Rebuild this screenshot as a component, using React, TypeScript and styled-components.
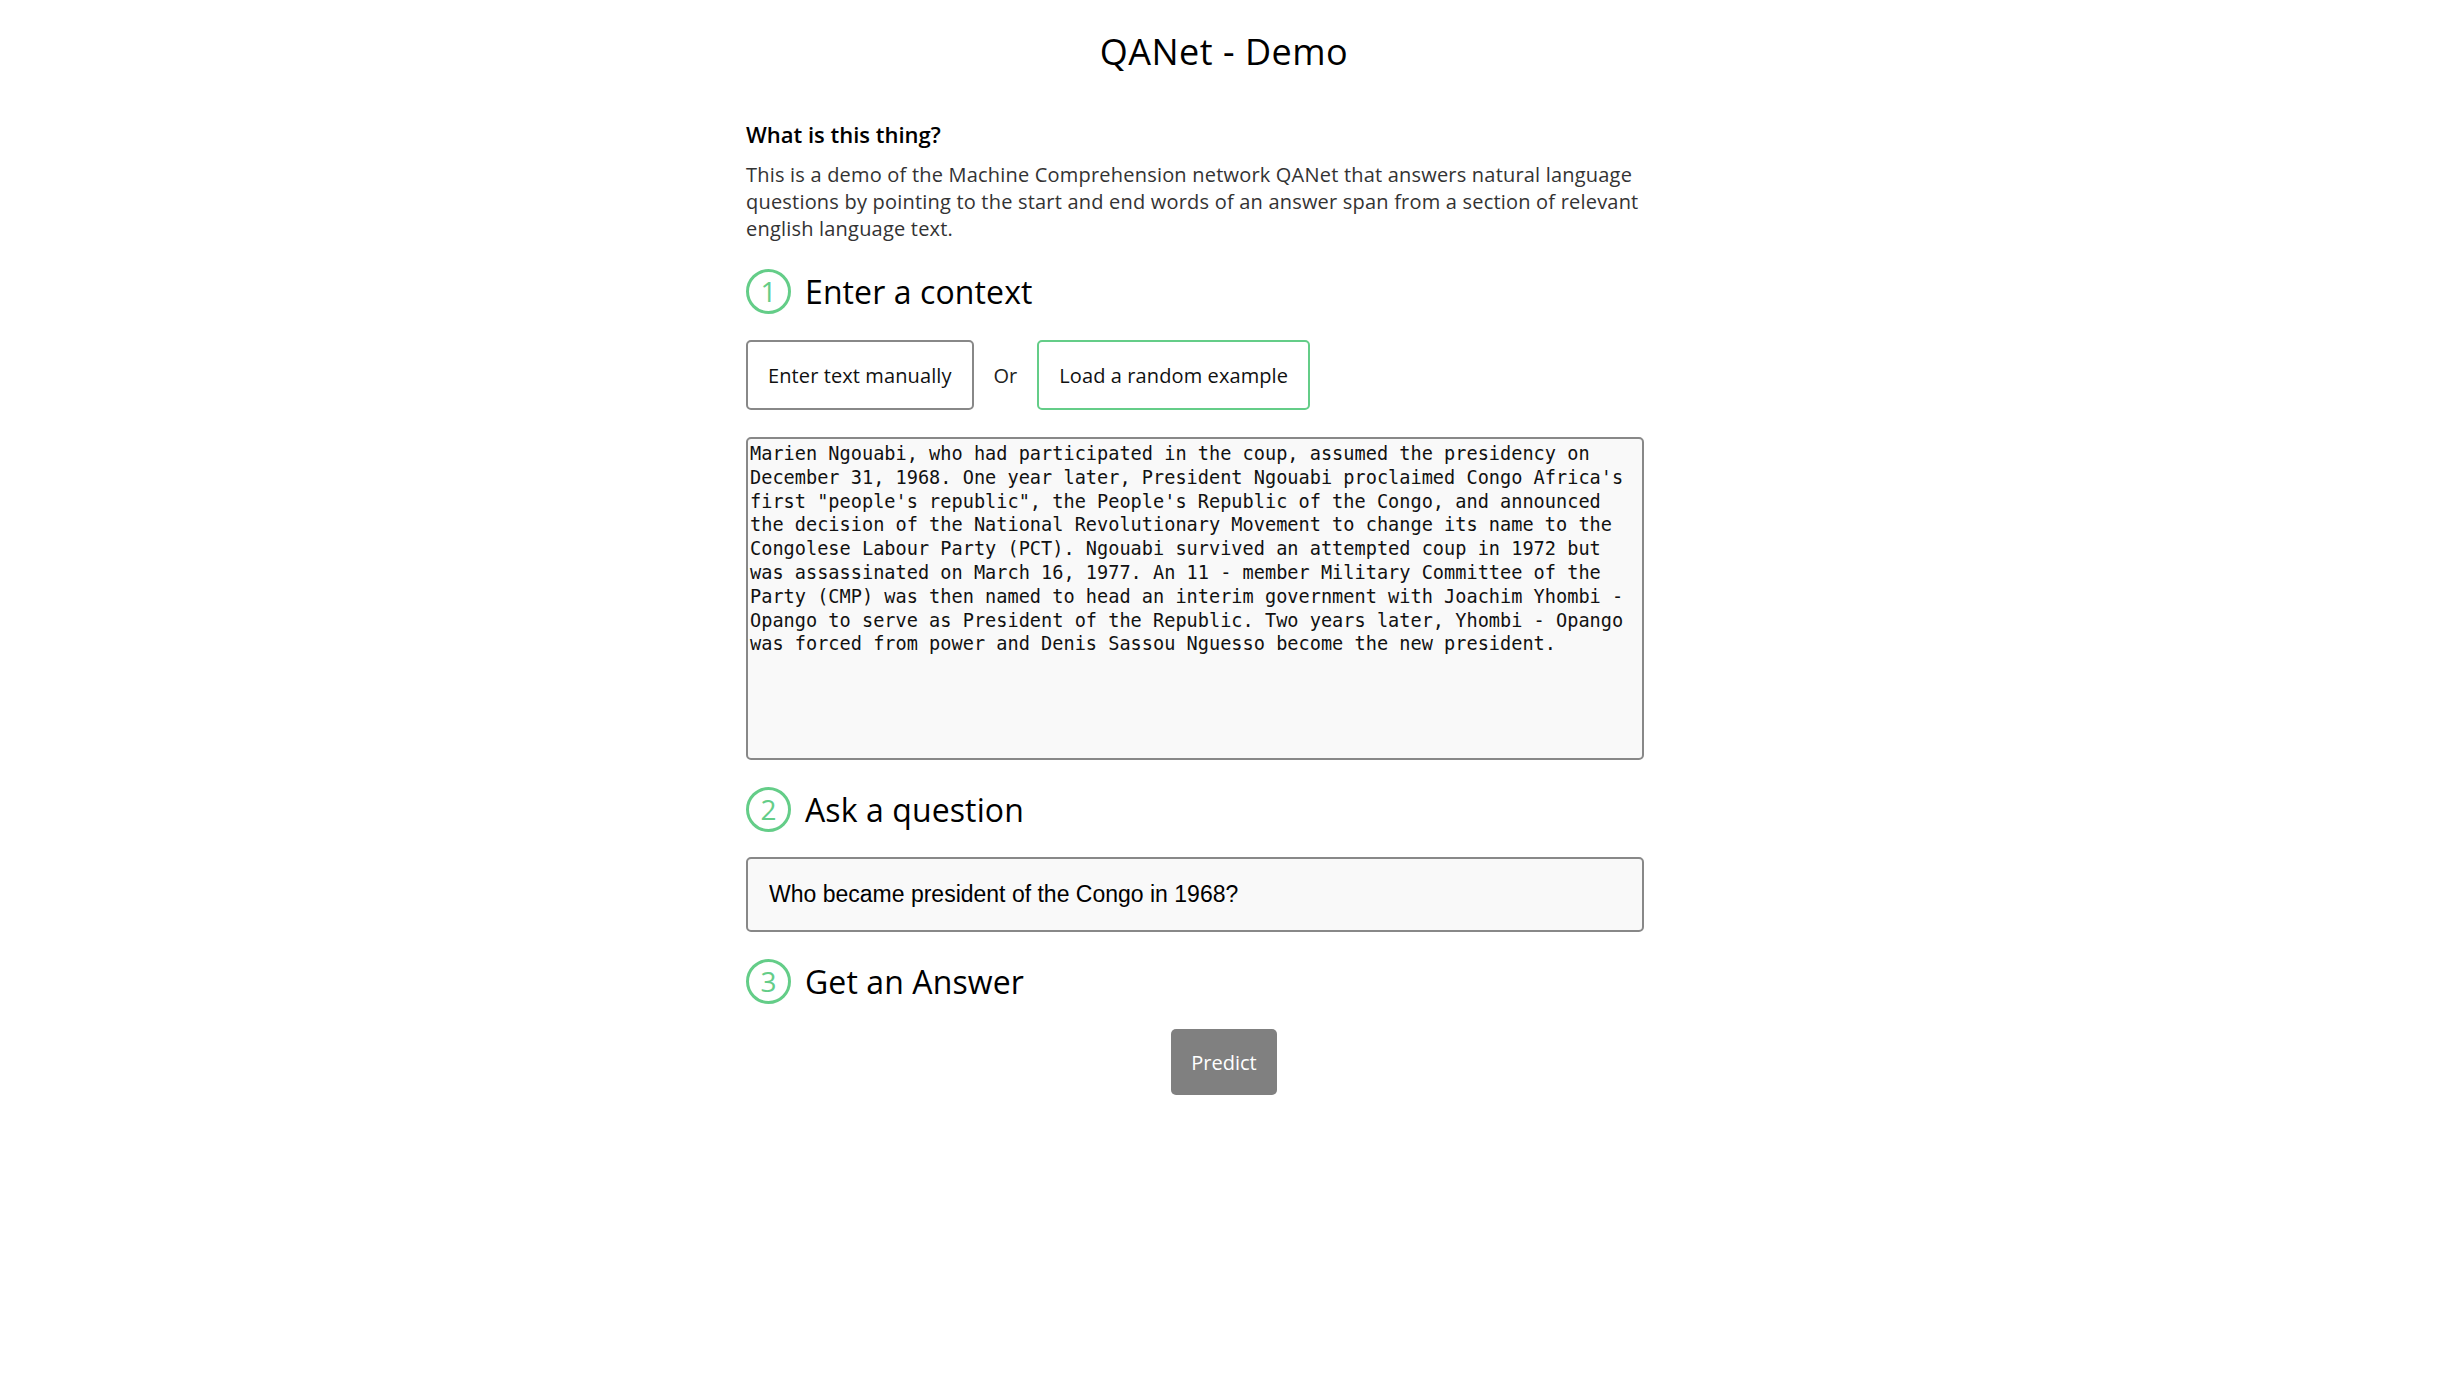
import React, {useState} from 'react';
import styled, {createGlobalStyle} from 'styled-components';

const GREEN = `#64cd88`;
const GREY_BORDER = `#888888`;

const contextText = `Marien Ngouabi, who had participated in the coup, assumed the presidency on December 31, 1968. One year later, President Ngouabi proclaimed Congo Africa's first "people's republic", the People's Republic of the Congo, and announced the decision of the National Revolutionary Movement to change its name to the Congolese Labour Party (PCT). Ngouabi survived an attempted coup in 1972 but was assassinated on March 16, 1977. An 11 - member Military Committee of the Party (CMP) was then named to head an interim government with Joachim Yhombi - Opango to serve as President of the Republic. Two years later, Yhombi - Opango was forced from power and Denis Sassou Nguesso become the new president.`;

const GlobalStyle = createGlobalStyle`
  html, body {
    margin: 0;
    padding: 0;
    background: #ffffff;
  }

  body {
    font-family: "Open Sans", "Noto Sans", sans-serif;
    color: #000000;
  }
`;

const Page = styled.main`
  width: 956px;

  margin-right: auto;
  margin-left: auto;
`;

const Title = styled.h1`
  margin: 27px 0 43px;

  font-size: 36px;
  font-weight: 400;
  line-height: normal;
  letter-spacing: 0.5px;
  text-align: center;
`;

const About = styled.h3`
  margin: 0 0 12px;

  font-size: 22px;
  font-weight: 600;
  line-height: normal;
`;

const Intro = styled.p`
  max-width: 900px;
  margin: 0 0 27px;

  font-size: 20px;
  line-height: normal;
  letter-spacing: 0.2px;
  color: #333333;
`;

const StepHeading = styled.h2<{bottom: number}>`
  display: flex;
  align-items: center;
  gap: 14px;

  height: 44px;
  margin: 0 0 ${({bottom}) => bottom + `px`};

  font-size: 32px;
  font-weight: 400;
  line-height: normal;
  letter-spacing: 0.1px;
`;

const StepNumber = styled.span`
  display: flex;
  align-items: center;
  justify-content: center;

  width: 45px;
  height: 45px;
  box-sizing: border-box;

  border: 3px solid ${GREEN};
  border-radius: 50%;

  font-size: 28px;
  font-weight: 400;
  line-height: 1;
  color: ${GREEN};
`;

const Choices = styled.div`
  display: flex;
  align-items: center;
  gap: 20px;

  margin-bottom: 27px;
`;

const ChoiceButton = styled.button<{active?: boolean}>`
  height: 70px;
  padding: 0 20px;
  box-sizing: border-box;

  border: 2px solid ${({active}) => (active ? GREEN : GREY_BORDER)};
  border-radius: 5px;
  background: #ffffff;

  font-family: "Open Sans", "Noto Sans", sans-serif;
  font-size: 20px;
  letter-spacing: 0.1px;
  color: #111111;
  cursor: pointer;
`;

const Or = styled.span`
  font-size: 20px;
  color: #222222;
`;

const ContextArea = styled.textarea`
  display: block;
  width: 898px;
  height: 323px;
  margin: 0 0 27px;
  padding: 3px 2px 2px;
  box-sizing: border-box;

  border: 2px solid ${GREY_BORDER};
  border-radius: 5px;
  background: #f9f9f9;
  outline: none;
  resize: none;

  font-family: "DejaVu Sans Mono", "Liberation Mono", monospace;
  font-size: 18.6px;
  line-height: 23.8px;
  color: #111111;
`;

const QuestionInput = styled.input`
  display: block;
  width: 898px;
  height: 75px;
  margin: 0 0 27px;
  padding: 0 21px;
  box-sizing: border-box;

  border: 2px solid ${GREY_BORDER};
  border-radius: 5px;
  background: #f9f9f9;
  outline: none;

  font-family: "Liberation Sans", Arial, sans-serif;
  font-size: 23px;
  color: #000000;
`;

const PredictRow = styled.div`
  display: flex;
  justify-content: center;
`;

const PredictButton = styled.button`
  padding: 19.5px 20px;

  border: none;
  border-radius: 5px;
  background: #808080;

  font-family: "Open Sans", "Noto Sans", sans-serif;
  font-size: 20px;
  line-height: 27px;
  color: #ffffff;
  cursor: pointer;
`;

const App = () => {
  const [context, setContext] = useState(contextText);
  const [question, setQuestion] = useState(`Who became president of the Congo in 1968?`);

  return (
    <>
      <GlobalStyle/>
      <Page>
        <Title>QANet - Demo</Title>

        <About>What is this thing?</About>
        <Intro>
          This is a demo of the Machine Comprehension network QANet that answers natural language
          questions by pointing to the start and end words of an answer span from a section of relevant
          english language text.
        </Intro>

        <StepHeading bottom = {27}>
          <StepNumber>1</StepNumber>
          Enter a context
        </StepHeading>
        <Choices>
          <ChoiceButton>Enter text manually</ChoiceButton>
          <Or>Or</Or>
          <ChoiceButton active>Load a random example</ChoiceButton>
        </Choices>
        <ContextArea value = {context} onChange = {(e) => setContext(e.target.value)} spellCheck = {false}/>

        <StepHeading bottom = {26}>
          <StepNumber>2</StepNumber>
          Ask a question
        </StepHeading>
        <QuestionInput value = {question} onChange = {(e) => setQuestion(e.target.value)}/>

        <StepHeading bottom = {26}>
          <StepNumber>3</StepNumber>
          Get an Answer
        </StepHeading>
        <PredictRow>
          <PredictButton>Predict</PredictButton>
        </PredictRow>
      </Page>
    </>
  );
};

export default App;
